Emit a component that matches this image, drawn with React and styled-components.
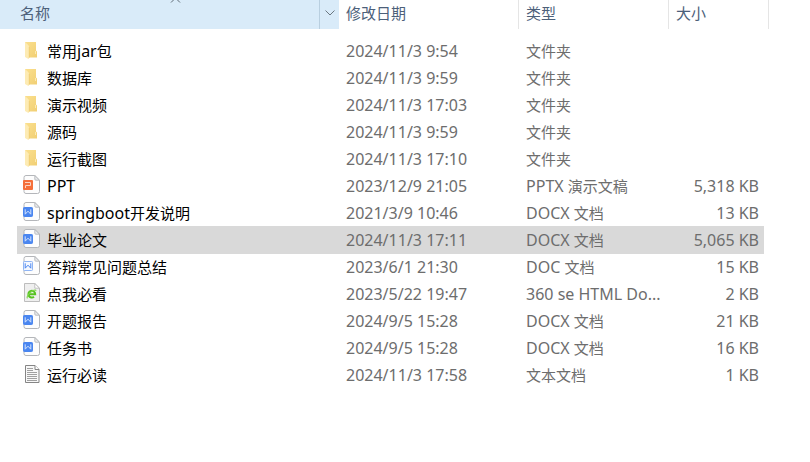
import React from 'react';
import styled, { createGlobalStyle } from 'styled-components';

const GlobalStyle = createGlobalStyle`
  body {
    margin: 0;
    background: #fff;
    font-family: "Noto Sans", "Noto Sans CJK SC", sans-serif;
    font-size: 15px;
    line-height: 20px;
    color: #6d6d6d;
  }
`;
const Table = styled.table`
  width: 100%;
  table-layout: fixed;
  border-collapse: separate;
  border-spacing: 0;
`;
const Col = styled.col`
  width: ${props => props.$width ? `${props.$width}px` : 'auto'};
`;
const HeadCell = styled.th`
  height: 29px;
  box-sizing: border-box;
  padding: 0;
  font-weight: normal;
  text-align: left;
  border-right: ${props => props.$sorted ? 'none' : '1px solid #e5e5e5'};
  background: ${props => props.$sorted ? '#d9ebf9' : 'transparent'};
`;
const HeadInner = styled.div`
  position: relative;
  display: flex;
  height: 29px;
`;
const SortButton = styled.button`
  flex: 1;
  padding: 0 0 4px ${props => props.$wide ? '20px' : '7px'};
  border: 0;
  background: none;
  font: inherit;
  text-align: left;
  color: #4c607a;
`;
const MenuButton = styled.button`
  display: flex;
  justify-content: center;
  align-items: flex-start;
  width: 20px;
  padding: 10px 0 0;
  border: 0;
  border-left: 1px solid #b9cfe0;
  background: none;
`;
const SortArrow = styled.svg`
  position: absolute;
  top: -3px;
  left: 50%;
`;
const Body = styled.tbody`
  &::before {
    content: '';
    display: block;
    height: 8px;
  }
`;
const Cell = styled.td`
  height: 27px;
  padding: 0 ${props => props.$right ? '5px' : '0'} 0 ${props => props.$name ? '6px' : '7px'};
  overflow: hidden;
  text-overflow: ellipsis;
  white-space: nowrap;
  text-align: ${props => props.$right ? 'right' : 'left'};
  color: ${props => props.$name ? '#000' : 'inherit'};
`;
const Row = styled.tr`
  ${Cell} {
    background: ${props => props.$selected ? '#d9d9d9' : 'transparent'};
    box-shadow: ${props => props.$selected ? '0 1px 0 #d9d9d9' : 'none'};
  }
`;
const Blank = styled.td`
  padding: 0;
`;
const NameInner = styled.div`
  display: flex;
  align-items: center;
  gap: 6px;
`;
const IconSvg = styled.svg`
  flex: none;
  display: block;
`;
const Latin = styled.span`
  font-size: 16px;
`;

// latin runs are set one pixel larger than the chinese ones
const Mixed = ({ text }) => text.split(/([\x20-\x7e]+)/).filter(Boolean).map((part, i) => (
  /^[\x20-\x7e]/.test(part) ? <Latin key={i}>{part}</Latin> : part
));

const FolderIcon = () => (
  <IconSvg width="18" height="20" viewBox="0 0 18 20">
    <defs>
      <linearGradient id="folderBack" x1="0" y1="0" x2="1" y2="1">
        <stop offset="0" stopColor="#fbe08e" />
        <stop offset="1" stopColor="#f1cf74" />
      </linearGradient>
    </defs>
    <path d="M2 1h11v8.5l1 1v6H4z" fill="url(#folderBack)" />
    <path d="M2 1l3.2 3q.8.8.8 2V17q0 1.2-1 .8L2 16z" fill="#fdebb4" />
    <path d="M6.2 6v11" stroke="#e8c566" strokeWidth=".5" />
    <path d="M12.5 10v3" stroke="#fff0bd" strokeWidth=".8" />
  </IconSvg>
);

const Page = () => (
  <>
    <path d="M3 .5h8.8l4.7 4.7v11.3a2 2 0 0 1-2 2H3a2 2 0 0 1-2-2v-14a2 2 0 0 1 2-2z" fill="#fdfdfd" stroke="#b4b6ba" />
    <path d="M11.8.5v3.7a1 1 0 0 0 1 1h3.7z" fill="#e9eaec" stroke="#aeb1b5" strokeWidth=".8" />
  </>
);

const PptIcon = () => (
  <IconSvg width="18" height="22" viewBox="0 0 18 22">
    <Page />
    <rect x="0" y="5" width="10" height="10" rx="1" fill="#f56f3a" />
    <path d="M2 7.5h5.500v3h-5v2.500" fill="none" stroke="#fbd3c2" />
  </IconSvg>
);

const WordIcon = ({ old }) => (
  <IconSvg width="18" height="22" viewBox="0 0 18 22">
    <Page />
    <rect
      x=".5"
      y="5.5"
      width="9"
      height="9"
      rx=".8"
      fill={old ? '#f4f8ff' : '#4a86f0'}
      stroke={old ? '#8fb5f5' : '#4a86f0'}
    />
    <path d="M2.2 7.3v4.900L5 9.200l2.800 3V7.300" fill="none" stroke={old ? '#4a86f0' : '#d3e3fd'} />
  </IconSvg>
);

const HtmlIcon = () => (
  <IconSvg width="18" height="22" viewBox="0 0 18 22">
    <path d="M1.5.5h10.3l4.7 4.7v13.3h-15z" fill="#efefef" stroke="#bdbdbd" />
    <path d="M11.8.5v4.7h4.7z" fill="#fff" stroke="#b4b4b4" strokeWidth=".8" />
    <path d="M5.4 11.2h6.8a3.4 3.4 0 1 0-1.2 2.6" fill="none" stroke="#58c322" strokeWidth="2" />
    <path d="M4.6 15.2c-1.6-.6 1-4.6 3.7-6.5s5.3-2.3 4.4-.7" fill="none" stroke="#7ed64a" strokeWidth="1.1" />
  </IconSvg>
);

const TextIcon = () => (
  <IconSvg width="18" height="20" viewBox="0 0 18 20">
    <path d="M2.5.5H12l4 4v13H2.5z" fill="#f8f8f8" stroke="#858585" />
    <path d="M12 .5v4h4" fill="#fff" stroke="#858585" />
    <path d="M4 3.5h6M4 5.5h6M4 7.5h10M4 9.5h10M4 11.5h10M4 13.5h10M4 15.5h10" stroke="#a0a0a0" />
  </IconSvg>
);

const icons = {
  folder: <FolderIcon />,
  ppt: <PptIcon />,
  docx: <WordIcon />,
  doc: <WordIcon old />,
  html: <HtmlIcon />,
  txt: <TextIcon />,
};

const files = [
  { icon: 'folder', name: '常用jar包', date: '2024/11/3 9:54', type: '文件夹' },
  { icon: 'folder', name: '数据库', date: '2024/11/3 9:59', type: '文件夹' },
  { icon: 'folder', name: '演示视频', date: '2024/11/3 17:03', type: '文件夹' },
  { icon: 'folder', name: '源码', date: '2024/11/3 9:59', type: '文件夹' },
  { icon: 'folder', name: '运行截图', date: '2024/11/3 17:10', type: '文件夹' },
  { icon: 'ppt', name: 'PPT', date: '2023/12/9 21:05', type: 'PPTX 演示文稿', size: '5,318 KB' },
  { icon: 'docx', name: 'springboot开发说明', date: '2021/3/9 10:46', type: 'DOCX 文档', size: '13 KB' },
  { icon: 'docx', name: '毕业论文', date: '2024/11/3 17:11', type: 'DOCX 文档', size: '5,065 KB', selected: true },
  { icon: 'doc', name: '答辩常见问题总结', date: '2023/6/1 21:30', type: 'DOC 文档', size: '15 KB' },
  { icon: 'html', name: '点我必看', date: '2023/5/22 19:47', type: '360 se HTML Do...', size: '2 KB' },
  { icon: 'docx', name: '开题报告', date: '2024/9/5 15:28', type: 'DOCX 文档', size: '21 KB' },
  { icon: 'docx', name: '任务书', date: '2024/9/5 15:28', type: 'DOCX 文档', size: '16 KB' },
  { icon: 'txt', name: '运行必读', date: '2024/11/3 17:58', type: '文本文档', size: '1 KB' },
];

const FileRow = ({ icon, name, date, type, size = '', selected }) => (
  <Row $selected={selected} aria-selected={!!selected}>
    <Blank />
    <Cell $name>
      <NameInner>
        {icons[icon]}
        <span><Mixed text={name} /></span>
      </NameInner>
    </Cell>
    <Cell><Mixed text={date} /></Cell>
    <Cell><Mixed text={type} /></Cell>
    <Cell $right><Mixed text={size} /></Cell>
    <Blank />
  </Row>
);

const App = () => (
  <>
    <GlobalStyle />
    <Table>
      <colgroup>
        <Col $width={17} />
        <Col $width={322} />
        <Col $width={180} />
        <Col $width={150} />
        <Col $width={95} />
        <Col $width={5} />
        <Col />
      </colgroup>
      <thead>
        <tr>
          <HeadCell $sorted colSpan={2} aria-sort="ascending">
            <HeadInner>
              <SortButton $wide>名称</SortButton>
              <SortArrow width="11" height="6" viewBox="0 0 11 6">
                <path d="M1 5.5L5.5 1L10 5.5" fill="none" stroke="#5f6b76" />
              </SortArrow>
              <MenuButton aria-label="筛选">
                <svg width="10" height="6" viewBox="0 0 10 6">
                  <path d="M.5.5L5 5L9.5.5" fill="none" stroke="#6b7780" />
                </svg>
              </MenuButton>
            </HeadInner>
          </HeadCell>
          <HeadCell><HeadInner><SortButton>修改日期</SortButton></HeadInner></HeadCell>
          <HeadCell><HeadInner><SortButton>类型</SortButton></HeadInner></HeadCell>
          <HeadCell colSpan={2}><HeadInner><SortButton>大小</SortButton></HeadInner></HeadCell>
        </tr>
      </thead>
      <Body>
        {files.map(file => <FileRow key={file.name} {...file} />)}
      </Body>
    </Table>
  </>
);

export default App;
